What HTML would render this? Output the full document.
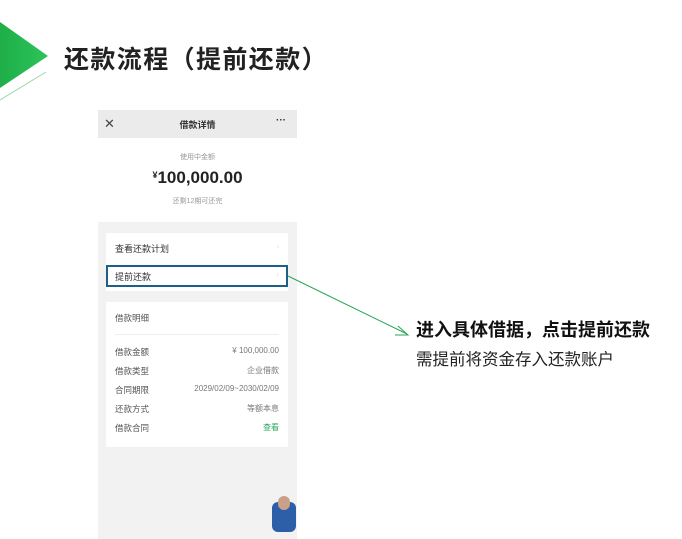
<!DOCTYPE html>
<html><head><meta charset="utf-8"><style>
body{margin:0;width:682px;height:539px;background:#fff;position:relative;overflow:hidden;font-family:"Liberation Sans","Noto Sans CJK SC",sans-serif;}
.a{position:absolute;white-space:nowrap}
.ph{position:absolute;left:98px;top:110px;width:199px;height:429px;background:#f2f2f2}
.card{position:absolute;left:8px;width:182px;background:#fff}
.r{position:absolute;left:9px;font-size:8.5px;color:#555}
.v{position:absolute;right:9px;font-size:8px;color:#777}
</style></head><body>
<svg class="a" style="left:0;top:0" width="80" height="110">
<defs><linearGradient id="g" x1="0" x2="1"><stop offset="0" stop-color="#1fae48"/><stop offset="1" stop-color="#2cc55a"/></linearGradient></defs>
<polygon points="0,22 48,56 0,88" fill="url(#g)"/>
<line x1="0" y1="100" x2="46" y2="72" stroke="#9bd7a8" stroke-width="1"/>
</svg>
<div class="a" style="left:64px;top:40px;font-size:25px;font-weight:bold;color:#222;letter-spacing:1.4px">还款流程（提前还款）</div>
<div class="ph">
 <div class="a" style="left:0;top:0;width:199px;height:28px;background:#ebebeb"></div>
 <div class="a" style="left:6px;top:6px;font-size:13px;color:#444">✕</div>
 <div class="a" style="left:0;width:199px;text-align:center;top:8px;font-size:9px;color:#333;font-weight:bold">借款详情</div>
 <div class="a" style="left:178px;top:5px;font-size:10px;color:#333;font-weight:bold">···</div>
 <div class="a" style="left:0;top:28px;width:199px;height:84px;background:#fff"></div>
 <div class="a" style="left:0;width:199px;text-align:center;top:42px;font-size:7px;color:#999">使用中金额</div>
 <div class="a" style="left:0;width:199px;text-align:center;top:58px;font-size:17px;color:#222;font-weight:bold"><span style="font-size:9px;vertical-align:5px">¥</span>100,000.00</div>
 <div class="a" style="left:0;width:199px;text-align:center;top:86px;font-size:7px;color:#999">还剩12期可还完</div>
 <div class="card" style="top:123px;height:58px">
  <div class="r" style="top:9px;font-size:9px;color:#333">查看还款计划</div><div class="v" style="top:9px;color:#ddd">›</div>
  <div class="r" style="top:37px;font-size:9px;color:#333">提前还款</div><div class="v" style="top:37px;color:#ddd">›</div>
 </div>
 <div class="a" style="left:8px;top:155px;width:178px;height:18px;border:2px solid #1e5f8a"></div>
 <div class="card" style="top:192px;height:145px">
  <div class="r" style="top:10px">借款明细</div>
  <div class="a" style="left:9px;top:32px;width:164px;height:1px;background:#eee"></div>
  <div class="r" style="top:44px">借款金额</div><div class="v" style="top:44px">¥ 100,000.00</div>
  <div class="r" style="top:63px">借款类型</div><div class="v" style="top:63px">企业借款</div>
  <div class="r" style="top:82px">合同期限</div><div class="v" style="top:82px">2029/02/09~2030/02/09</div>
  <div class="r" style="top:101px">还款方式</div><div class="v" style="top:101px">等额本息</div>
  <div class="r" style="top:120px">借款合同</div><div class="v" style="top:120px;color:#2aa55a">查看</div>
 </div>
 <div class="a" style="left:174px;top:392px;width:24px;height:30px;border-radius:6px;background:#2d5ea8"></div>
 <div class="a" style="left:180px;top:386px;width:12px;height:14px;border-radius:6px;background:#c9a08a"></div>
</div>
<svg class="a" style="left:0;top:0" width="682" height="539">
<line x1="288" y1="276" x2="407" y2="334" stroke="#2aa55a" stroke-width="1"/>
<polyline points="398,326 408,335 395,335" fill="none" stroke="#2aa55a" stroke-width="1"/>
</svg>
<div class="a" style="left:416px;top:316px;font-size:18px;font-weight:bold;color:#111">进入具体借据，点击提前还款</div>
<div class="a" style="left:416px;top:346px;font-size:16.5px;color:#222">需提前将资金存入还款账户</div>
</body></html>
